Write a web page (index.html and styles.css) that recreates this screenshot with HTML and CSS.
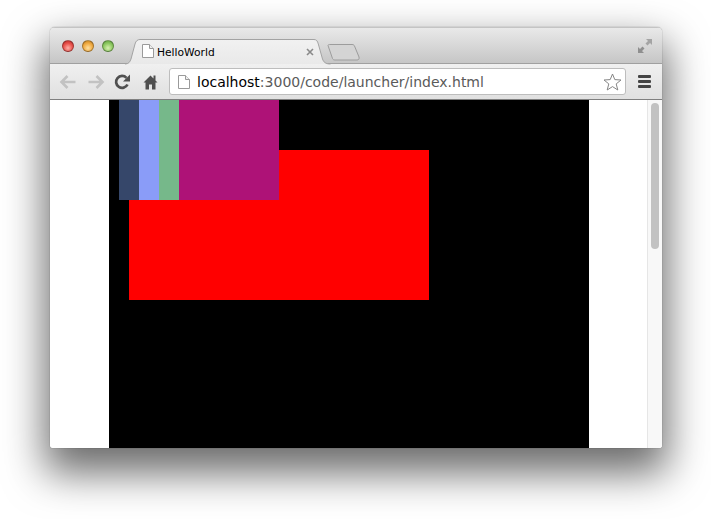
FILE: index.html
```html
<!DOCTYPE html>
<html lang="en">
<head>
<meta charset="utf-8">
<title>HelloWorld</title>
<link rel="stylesheet" href="styles.css">
</head>
<body>
<div class="window">
  <header class="titlebar">
    <div class="lights">
      <span class="light red"></span>
      <span class="light amber"></span>
      <span class="light green"></span>
    </div>
    <div class="tab">
      <svg class="tab-shape" width="206" height="26" viewBox="0 0 206 26"><defs><linearGradient id="tabfill" x1="0" y1="0" x2="0" y2="1"><stop offset="0" stop-color="#f1f1f1"/><stop offset="1" stop-color="#e9e9e9"/></linearGradient></defs><path d="M0 25C3.500 25 5 23 6 20L10 5C10.800 2 12.500 .5 15 .5H189C191.500 .5 192.500 2 193.300 5L197.500 20C198.500 23 200.500 25 205.500 25" fill="url(#tabfill)" stroke="#a3a3a3"/></svg>
      <svg class="page-icon" width="12" height="14" viewBox="0 0 12 14"><path d="M.5 .5H7.500L11.500 4.500V13.500H.5Z" fill="#fff" stroke="#9a9a9a"/><path d="M7.500 .5V4.500H11.500" fill="#eee" stroke="#9a9a9a"/></svg>
      <span class="tab-title">HelloWorld</span>
      <svg class="tab-close" width="8" height="8" viewBox="0 0 8 8"><path d="M1 1L7 7M7 1L1 7" stroke="#8a8a8a" stroke-width="1.600"/></svg>
    </div>
    <svg class="new-tab" width="33" height="17" viewBox="0 0 33 17"><path d="M1 1.500C1 1 1.500 .5 2.500 .5H25C26.500 .5 27 1 27.500 2L32 13C32.500 15 31.500 16 30 16H8C6.500 16 6 15.500 5.500 14.500Z" fill="#d4d4d4" stroke="#9c9c9c"/></svg>
    <svg class="fullscreen" width="16" height="16" viewBox="0 0 16 16"><path d="M9 1H15V7L13 5L10.500 7.500L8.500 5.500L11 3Z" fill="#a4a4a4"/><path d="M1 9V15H7L5 13L7.500 10.500L5.500 8.500L3 11Z" fill="#8f8f8f"/></svg>
  </header>
  <nav class="toolbar">
    <svg class="tool" width="18" height="16" viewBox="0 0 18 16"><path d="M16.500 8H3M8.500 2L2.500 8L8.500 14" fill="none" stroke="#c2c2c2" stroke-width="2.600"/></svg>
    <svg class="tool" width="18" height="16" viewBox="0 0 18 16"><path d="M1.500 8H15M9.500 2L15.500 8L9.500 14" fill="none" stroke="#c2c2c2" stroke-width="2.600"/></svg>
    <svg class="tool reload" width="16" height="16" viewBox="0 0 16 16"><path d="M13.500 10.500A6 6 0 1 1 12.500 3.800" fill="none" stroke="#505050" stroke-width="2.700"/><path d="M9 7.500H16V0.500Z" fill="#505050"/></svg>
    <svg class="tool home" width="15" height="16" viewBox="0 0 15 16"><path d="M7.500 1.500L0.500 8.500H2.500V15.500H6V10.500H9V15.500H12.500V8.500H14.500L12.500 6.500V1.500H10.500V4.500Z" fill="#505050"/></svg>
    <div class="omnibox">
      <svg class="omni-icon" width="12" height="14" viewBox="0 0 12 14"><path d="M.5 .5H7.500L11.500 4.500V13.500H.5Z" fill="#fff" stroke="#9a9a9a"/><path d="M7.500 .5V4.500H11.500" fill="#eee" stroke="#9a9a9a"/></svg>
      <span class="url"><span class="host">localhost</span>:3000/code/launcher/index.html</span>
      <svg class="star" width="19" height="18" viewBox="0 0 19 18"><path d="M9.500 1L11.800 6.600L18 7L13.200 10.900L14.800 17L9.500 13.600L4.200 17L5.800 10.900L1 7L7.200 6.600Z" fill="#fff" stroke="#858585"/></svg>
    </div>
    <div class="menu"><span></span><span></span><span></span></div>
  </nav>
  <main class="viewport">
    <div class="page">
      <div class="canvas">
        <div class="rect r-red"></div>
        <div class="rect r-navy"></div>
        <div class="rect r-peri"></div>
        <div class="rect r-green"></div>
        <div class="rect r-magenta"></div>
      </div>
    </div>
    <div class="scrollbar"><div class="thumb"></div></div>
  </main>
</div>
</body>
</html>
```
FILE: styles.css
```css
* { box-sizing: border-box; }
html, body { margin: 0; height: 100%; background: #fff; overflow: hidden; }
body { padding: 27px 49px 71px 50px; font-family: "DejaVu Sans", sans-serif; }

.window {
  height: 421px;
  display: flex;
  flex-direction: column;
  border-radius: 5px 5px 3px 3px;
  overflow: hidden;
  box-shadow: 0 0 1px rgba(0,0,0,.6), 0 20px 40px 5px rgba(0,0,0,.58);
}

.titlebar {
  position: relative;
  height: 37px;
  flex: none;
  display: flex;
  align-items: flex-start;
  background: linear-gradient(#e9e9e9, #c6c6c6);
  border-top: 1px solid #c4c4c4;
  border-bottom: 1px solid #a0a0a0;
}
.lights { display: flex; gap: 8px; padding: 12px 0 0 12px; }
.light { width: 12px; height: 12px; border-radius: 50%; border: 1px solid rgba(0,0,0,.3); }
.red { background: radial-gradient(circle at 50% 70%, #ffb0a8, #e8504a 55%, #b02a2a); }
.amber { background: radial-gradient(circle at 50% 70%, #ffe0a0, #f0aa40 55%, #b87a20); }
.green { background: radial-gradient(circle at 50% 70%, #d8f0b0, #8cc860 55%, #5c9a3c); }

.tab {
  position: absolute;
  left: 75px;
  top: 11px;
  width: 206px;
  height: 26px;
  display: flex;
  align-items: center;
  padding: 0 0 0 17px;
}
.tab-shape { position: absolute; left: 0; top: 0; }
.page-icon { position: relative; margin-top: -2px; }
.tab-title { position: relative; font-size: 10.7px; color: #000; margin-left: 3px; }
.tab-close { position: absolute; left: 181px; top: 9px; }
.new-tab { position: absolute; left: 277px; top: 16px; }
.fullscreen { position: absolute; right: 9px; top: 10px; }

.toolbar {
  height: 36px;
  flex: none;
  display: flex;
  align-items: center;
  padding: 0 11px 0 9px;
  gap: 10px;
  background: linear-gradient(#f0f0f0, #e0e0e0);
  border-bottom: 1px solid #7f7f7f;
}
.reload { margin-left: -1px; }
.home { margin-left: 3px; }
.omnibox {
  flex: 1;
  height: 27px;
  margin-left: 1px;
  display: flex;
  align-items: center;
  padding: 0 3px 0 8px;
  background: #fff;
  border: 1px solid #bdbdbd;
  border-radius: 3px;
}
.url { flex: 1; margin-left: 7px; font-size: 14px; color: #5a5a5a; white-space: nowrap; }
.host { color: #000; }
.menu { display: flex; flex-direction: column; gap: 2px; width: 13px; margin-left: 2px; }
.menu span { height: 3px; background: #444; border-radius: 1px; }

.viewport { flex: 1; display: flex; background: #fff; min-height: 0; }
.page { flex: 1; padding: 0 58px 0 59px; min-width: 0; }
.canvas { position: relative; height: 100%; background: #000; overflow: hidden; }
.rect { position: absolute; }
.r-red { left: 20px; top: 50px; width: 300px; height: 150px; background: #f00; }
.r-navy { left: 10px; top: 0; width: 20px; height: 100px; background: #36476a; }
.r-peri { left: 30px; top: 0; width: 20px; height: 100px; background: #8a9cf8; }
.r-green { left: 50px; top: 0; width: 20px; height: 100px; background: #76b88a; }
.r-magenta { left: 70px; top: 0; width: 100px; height: 100px; background: #ae1277; }

.scrollbar {
  width: 15px;
  flex: none;
  padding: 3px 3px 0 3px;
  background: #f8f8f8;
  border-left: 1px solid #e6e6e6;
}
.thumb { height: 146px; background: #c2c2c2; border-radius: 4px; }
```
